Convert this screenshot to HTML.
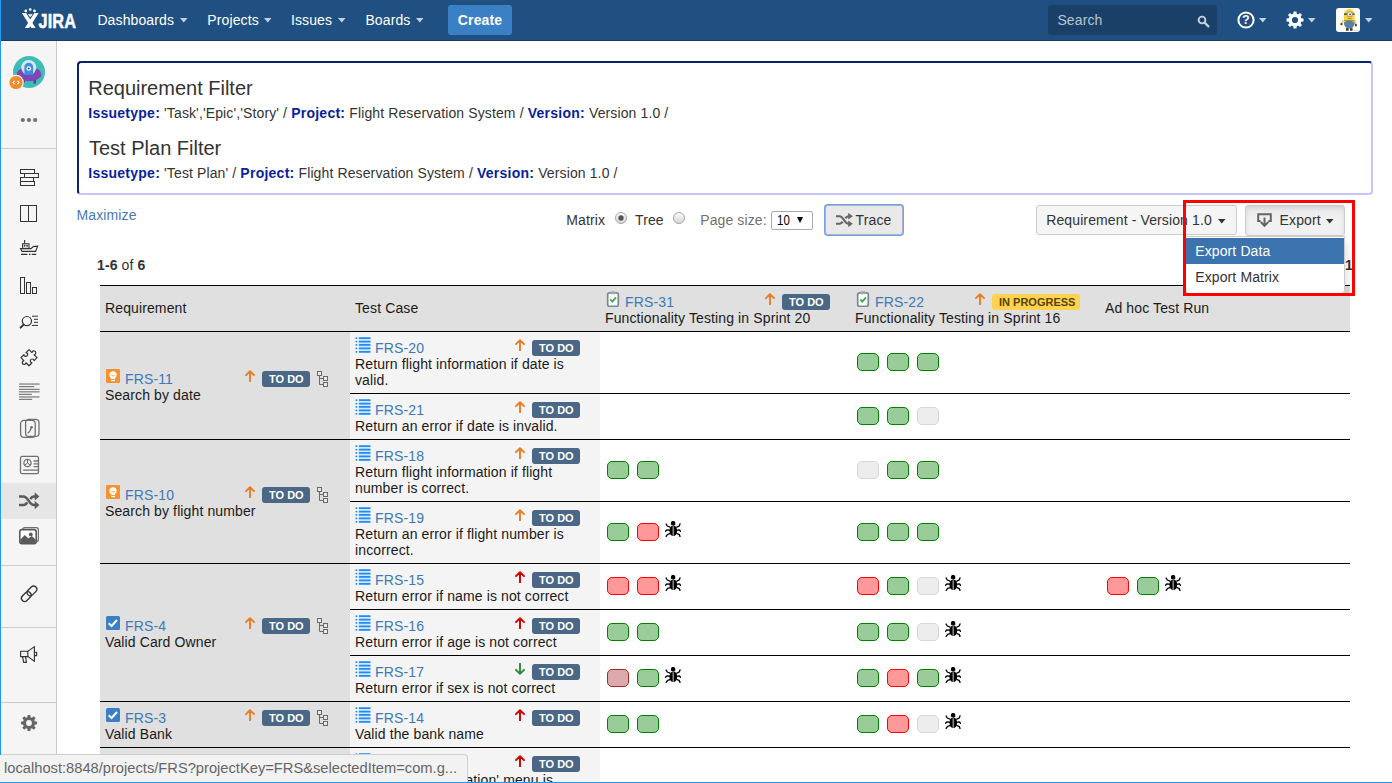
<!DOCTYPE html>
<html><head><meta charset="utf-8"><title>Traceability</title>
<style>
html,body{margin:0;padding:0}
body{width:1392px;height:783px;overflow:hidden;position:relative;background:#fff;font-family:"Liberation Sans",sans-serif;font-size:14px;line-height:16px;color:#111;letter-spacing:0.12px}
.ab{position:absolute;white-space:nowrap}
.ab svg{display:block}
.lk{color:#3f78b6}
.tx{color:#1a1a1a}
.hl{position:absolute;height:1px;background:#000}
.loz{display:block;height:16px;line-height:16px;padding:0 7px;border-radius:3px;font-size:11px;font-weight:bold;letter-spacing:0;white-space:nowrap}
.loz.todo{background:#4a6785;color:#fff;width:34px;text-align:center}
.loz.prog{background:#ffd351;color:#594300;width:74px;text-align:center}
.bx{position:absolute;box-sizing:border-box;width:22px;height:18px;border-radius:5px;border:1px solid}
.bx.g{border-color:#008000;background:#99cc99}
.bx.r{border-color:#ff0000;background:#ff9999}
.bx.y{border-color:#d6d6d6;background:#ededed}
.bx.b{border-color:#a52a2a;background:#dbaaaa}
.nv{color:#fff}
</style></head><body>
<div class="ab" style="left:0;top:0;width:1392px;height:40px;background:#205081;border-bottom:1px solid #1d3b5c"></div>
<div class="ab" style="left:22px;top:7px"><svg width="58" height="24" viewBox="0 0 58 24" >
<g fill="#fff">
<circle cx="3.8" cy="3.9" r="1.35"/><circle cx="8.2" cy="2.5" r="1.35"/><circle cx="12.5" cy="3.9" r="1.35"/>
<path d="M5.9 7.3 L10.7 7.3 L8.3 10.3 Z"/>
</g>
<clipPath id="lgc"><rect x="-1" y="6" width="20" height="15.1"/></clipPath>
<g stroke="#fff" stroke-width="3.6" fill="none" clip-path="url(#lgc)">
<path d="M1.1 4.6 L12.6 22.7"/><path d="M15.4 4.6 L3.9 22.7"/>
</g>
<text x="16.6" y="21" font-family="Liberation Sans" font-weight="bold" font-size="20.6" fill="#fff" stroke="#fff" stroke-width="0.5" textLength="37.4" lengthAdjust="spacingAndGlyphs">JIRA</text>
</svg></div>
<div class="ab nv" style="left:97.4px;top:12px">Dashboards</div><div class="ab" style="left:180.3px;top:18px"><svg width="8" height="5" viewBox="0 0 8 5" ><path d="M0 0 H7.5 L3.75 4.4 Z" fill="#c4d0dd"/></svg></div>
<div class="ab nv" style="left:207.3px;top:12px">Projects</div><div class="ab" style="left:264.2px;top:18px"><svg width="8" height="5" viewBox="0 0 8 5" ><path d="M0 0 H7.5 L3.75 4.4 Z" fill="#c4d0dd"/></svg></div>
<div class="ab nv" style="left:290.9px;top:12px">Issues</div><div class="ab" style="left:338px;top:18px"><svg width="8" height="5" viewBox="0 0 8 5" ><path d="M0 0 H7.5 L3.75 4.4 Z" fill="#c4d0dd"/></svg></div>
<div class="ab nv" style="left:365.4px;top:12px">Boards</div><div class="ab" style="left:416.1px;top:18px"><svg width="8" height="5" viewBox="0 0 8 5" ><path d="M0 0 H7.5 L3.75 4.4 Z" fill="#c4d0dd"/></svg></div>
<div class="ab" style="left:448px;top:5px;width:64px;height:30px;border-radius:3px;background:#3b7fc4;color:#fff;font-weight:bold;text-align:center;line-height:30px">Create</div>
<div class="ab" style="left:1048px;top:5px;width:169px;height:30px;border-radius:3px;background:#1a4067"></div>
<div class="ab" style="left:1057.4px;top:12px;color:#b9c5d2">Search</div>
<div class="ab" style="left:1197px;top:14.5px"><svg width="13" height="13" viewBox="0 0 13 13" ><circle cx="5" cy="5" r="3.4" fill="none" stroke="#c4d0dd" stroke-width="1.9"/><path d="M7.6 7.6 L11.4 11.4" stroke="#c4d0dd" stroke-width="2.2" stroke-linecap="round"/></svg></div>
<div class="ab" style="left:1236.4px;top:10px"><svg width="20" height="20" viewBox="0 0 20 20" ><circle cx="10" cy="10" r="7.6" fill="none" stroke="#fff" stroke-width="2"/><text x="10" y="14.3" text-anchor="middle" font-family="Liberation Sans" font-weight="bold" font-size="12.5" fill="#fff">?</text></svg></div><div class="ab" style="left:1259.4px;top:18px"><svg width="8" height="5" viewBox="0 0 8 5" ><path d="M0 0 H7.5 L3.75 4.4 Z" fill="#c4d0dd"/></svg></div>
<div class="ab" style="left:1285.4px;top:10px"><svg width="20" height="20" viewBox="0 0 20 20" ><path fill-rule="evenodd" fill="#fff" d="M16.16 8.26 L18.48 8.59 L18.48 11.41 L16.16 11.74 L15.58 13.13 L17.00 15.00 L15.00 17.00 L13.13 15.58 L11.74 16.16 L11.41 18.48 L8.59 18.48 L8.26 16.16 L6.87 15.58 L5.00 17.00 L3.00 15.00 L4.42 13.13 L3.84 11.74 L1.52 11.41 L1.52 8.59 L3.84 8.26 L4.42 6.87 L3.00 5.00 L5.00 3.00 L6.87 4.42 L8.26 3.84 L8.59 1.52 L11.41 1.52 L11.74 3.84 L13.13 4.42 L15.00 3.00 L17.00 5.00 L15.58 6.87 Z M13.1 10.0 A3.1 3.1 0 1 0 6.9 10.0 A3.1 3.1 0 1 0 13.1 10.0 Z"/></svg></div><div class="ab" style="left:1308.4px;top:18px"><svg width="8" height="5" viewBox="0 0 8 5" ><path d="M0 0 H7.5 L3.75 4.4 Z" fill="#c4d0dd"/></svg></div>
<div class="ab" style="left:1336px;top:8px"><svg width="24" height="24" viewBox="0 0 24 24" ><rect width="24" height="24" rx="3" fill="#fff"/>
<path d="M7.4 12.4 L5.6 15.6" stroke="#f3cf2e" stroke-width="1.6"/><path d="M18.8 12.4 L19.8 16.6" stroke="#f3cf2e" stroke-width="1.6"/>
<circle cx="5.4" cy="16.2" r="1.1" fill="#3a3a3a"/><circle cx="19.9" cy="17.2" r="1.1" fill="#3a3a3a"/>
<rect x="8" y="1" width="10.6" height="19.6" rx="5.3" fill="#f6d232"/>
<path d="M8 14.2 H18.6 V15.3 A5.3 5.3 0 0 1 8 15.3 Z" fill="#5b7fa6"/>
<rect x="10.2" y="12.2" width="6.2" height="3" fill="#5b7fa6"/>
<path d="M8.2 12.4 L10.4 13.4 M18.4 12.4 L16.2 13.4" stroke="#5b7fa6" stroke-width="1"/>
<rect x="8" y="5.4" width="10.6" height="1.5" fill="#4a4a4a"/>
<circle cx="13.8" cy="6.2" r="2.9" fill="#9a9a9a"/><circle cx="13.8" cy="6.2" r="2" fill="#fff"/><circle cx="14.1" cy="6.4" r="0.95" fill="#6b3a1a"/>
<path d="M11.8 10.2 Q13.6 11.2 15.6 10.2" stroke="#7a5a10" stroke-width="0.6" fill="none"/>
<rect x="10" y="20.2" width="2.6" height="2.5" fill="#333"/><rect x="14" y="20.2" width="2.6" height="2.5" fill="#333"/>
<path d="M16.5 22.6 H22" stroke="#cfcfcf" stroke-width="0.9"/></svg></div><div class="ab" style="left:1365.2px;top:18px"><svg width="8" height="5" viewBox="0 0 8 5" ><path d="M0 0 H7.5 L3.75 4.4 Z" fill="#c4d0dd"/></svg></div>

<div class="ab" style="left:0;top:41px;width:56px;height:742px;background:#f5f5f5;border-right:1px solid #ccc"></div>
<div class="ab" style="left:9px;top:54px"><svg width="40" height="40" viewBox="0 0 40 40" >
<circle cx="20" cy="18" r="16" fill="#3ebdb6"/>
<ellipse cx="20" cy="20.2" rx="12.2" ry="7" fill="#7f46b5"/>
<rect x="24.6" y="26" width="2.4" height="3.6" fill="#6b35a3"/><rect x="14" y="26.4" width="2" height="2" fill="#6b35a3"/>
<circle cx="19.75" cy="13.6" r="7.5" fill="#e4ebf3" opacity="0.92"/>
<path d="M15.4 21 V12.8 A4.35 4 0 0 1 24.1 12.8 V21 Z" fill="#3b8fe0"/>
<path d="M8 21.5 Q20 27.5 32 21.5 L32 22.5 Q20 30 8 22.5 Z" fill="#7f46b5"/>
<circle cx="19.75" cy="14.5" r="2.3" fill="#fff"/><circle cx="19.75" cy="14.5" r="1" fill="#3a4a78"/>
<circle cx="7" cy="28.5" r="7.8" fill="#f5f5f5"/><circle cx="7" cy="28.5" r="6.6" fill="#f28b2b"/>
<path d="M5.6 26.9 L4 28.5 L5.6 30.1 M8.4 26.9 L10 28.5 L8.4 30.1" fill="none" stroke="#fff" stroke-width="1.1"/>
</svg></div>
<div class="ab" style="left:19.9px;top:117.0px"><svg width="18" height="6" viewBox="0 0 18 6" ><circle cx="2.8" cy="3" r="2.1" fill="#707070"/><circle cx="9" cy="3" r="2.1" fill="#707070"/><circle cx="15.2" cy="3" r="2.1" fill="#707070"/></svg></div>
<div class="ab" style="left:1px;top:148px;width:55px;height:1px;background:#ccc"></div>
<div class="ab" style="left:19px;top:168px"><svg width="21" height="19" viewBox="0 0 21 19" ><g fill="none" stroke="#333" stroke-width="1" shape-rendering="crispEdges"><rect x="1.5" y="1.5" width="14" height="4"/><rect x="5.5" y="5.5" width="14" height="4"/><rect x="1.5" y="9.5" width="13" height="4"/><rect x="1.5" y="13.5" width="14" height="4"/></g></svg></div>
<div class="ab" style="left:19px;top:204px"><svg width="19" height="19" viewBox="0 0 19 19" ><g fill="none" stroke="#333" stroke-width="1" shape-rendering="crispEdges"><rect x="1.5" y="1.5" width="16" height="16"/><path d="M9.5 1.5 V17.5"/></g></svg></div>
<div class="ab" style="left:19px;top:239px"><svg width="21" height="18" viewBox="0 0 21 18" ><g fill="none" stroke="#333" stroke-width="1.1"><path d="M5.6 1 V4.8"/><rect x="3.6" y="4.8" width="6.4" height="4.6"/><path d="M1.6 9.6 H12 L14.2 7.6 L18.6 7.2 L16.6 12.4 H3 Z"/><path d="M2 15.4 H8.4 M10 15.4 H11.6 M12.8 15.4 H17.2"/></g><rect x="4.9" y="6" width="1.5" height="1.6" fill="#333"/><rect x="7.3" y="6" width="1.5" height="1.6" fill="#333"/></svg></div>
<div class="ab" style="left:19px;top:276px"><svg width="19" height="19" viewBox="0 0 19 19" ><g fill="none" stroke="#333" stroke-width="1" shape-rendering="crispEdges"><rect x="1.5" y="1.5" width="4" height="16"/><rect x="7.5" y="6.5" width="4" height="11"/><rect x="13.5" y="11.5" width="4" height="6"/></g></svg></div>
<div class="ab" style="left:19px;top:314px"><svg width="21" height="16" viewBox="0 0 21 16" ><g fill="none" stroke="#333"><circle cx="7.9" cy="7.1" r="4.6" stroke-width="1.2"/><path d="M4.6 10.6 L1.6 13.6" stroke-width="2" stroke-linecap="round"/><path d="M13 2.2 H19 M15 5.3 H19 M15 8.3 H19 M13 11.4 H19" stroke-width="1"/></g></svg></div>
<div class="ab" style="left:19px;top:348px"><svg width="20" height="20" viewBox="0 0 20 20" ><g transform="translate(10 9.7) rotate(45)"><path fill="none" stroke="#333" stroke-width="1.2" stroke-linejoin="round" d="M-5.7 -5.7 L-1.5 -5.7 A1.9 1.9 0 1 1 1.5 -5.7 L5.7 -5.7 L5.7 -1.5 A1.9 1.9 0 1 0 5.7 1.5 L5.7 5.7 L1.5 5.7 A1.9 1.9 0 1 1 -1.5 5.7 L-5.7 5.7 L-5.7 1.5 A1.9 1.9 0 1 0 -5.7 -1.5 Z"/></g></svg></div>
<div class="ab" style="left:18.7px;top:383px"><svg width="22" height="18" viewBox="0 0 22 18" ><rect x="0" y="0.50" width="20.6" height="1.1" fill="#707070"/><rect x="0" y="3.10" width="15.2" height="1.1" fill="#707070"/><rect x="0" y="5.80" width="20.6" height="1.1" fill="#707070"/><rect x="0" y="8.30" width="20.6" height="1.1" fill="#707070"/><rect x="0" y="10.80" width="12.8" height="1.1" fill="#707070"/><rect x="0" y="13.40" width="20.6" height="1.1" fill="#707070"/><rect x="0" y="15.80" width="13.2" height="1.1" fill="#707070"/></svg></div>
<div class="ab" style="left:19px;top:418px"><svg width="22" height="21" viewBox="0 0 22 21" ><g fill="none" stroke="#707070" stroke-width="1.3"><rect x="1.6" y="2.4" width="14.6" height="17" rx="3.2"/><rect x="6.6" y="1.4" width="13.4" height="17" rx="3.2"/><path d="M12.4 9.4 C11.6 12.6 10.4 14.2 8.6 15.2"/></g><circle cx="12.6" cy="9.2" r="1.3" fill="#707070"/></svg></div>
<div class="ab" style="left:18.5px;top:454.5px"><svg width="22" height="21" viewBox="0 0 22 21" ><g fill="none" stroke="#707070" stroke-width="1.3"><rect x="1.5" y="1.4" width="18" height="17.2" rx="1.6"/><circle cx="8.5" cy="8" r="3.6"/><path d="M8.5 4.4 V8 L5.6 10.2 M8.5 8 L11.4 10.2" stroke-width="1"/><path d="M14.6 6 H19 M14.6 8.8 H19 M14.6 11.6 H19 M4.2 15.2 H19"/></g></svg></div>
<div class="ab" style="left:1px;top:483px;width:55px;height:36px;background:#e6e6e6"></div>
<div class="ab" style="left:18.7px;top:492px"><svg width="21" height="18" viewBox="0 0 21 18" ><g fill="none" stroke="#5a5a5a" stroke-width="2.5"><path d="M0 4.4 H4.4 C9.6 4.4 9.6 13.1 15 13.1 H16.4"/><path d="M0 13.1 H4.4 C6.4 13.1 7.4 11.8 8.2 10.4 M11.4 7.1 C12.2 5.7 13.2 4.4 15 4.4 H16.4"/></g><path d="M15.7 0.3 L20.4 4.4 L15.7 8.5 Z M15.7 9 L20.4 13.1 L15.7 17.2 Z" fill="#5a5a5a"/></svg></div>
<div class="ab" style="left:18px;top:526px"><svg width="22" height="20" viewBox="0 0 22 20" ><rect x="4.6" y="1.6" width="15.8" height="14" rx="2.2" fill="none" stroke="#707070" stroke-width="1.2"/><rect x="1.8" y="3.6" width="16.4" height="14.2" rx="2.2" fill="#fff" stroke="#5a5a5a" stroke-width="1.6"/><path d="M2.4 13.4 L6.8 9 L10.2 12.4 L13.8 10 L17.6 13.6 V17.2 H2.4 Z" fill="#5a5a5a"/><circle cx="12.8" cy="8.4" r="1.9" fill="#5a5a5a"/></svg></div>
<div class="ab" style="left:1px;top:565px;width:55px;height:1px;background:#ccc"></div>
<div class="ab" style="left:19px;top:584px"><svg width="21" height="20" viewBox="0 0 21 20" ><g fill="none" stroke="#333" stroke-width="1.35" transform="rotate(-45 10.1 9.8)"><rect x="0.6" y="6.6" width="11" height="6.4" rx="3.2"/><rect x="8.6" y="6.6" width="11" height="6.4" rx="3.2"/></g></svg></div>
<div class="ab" style="left:1px;top:627px;width:55px;height:1px;background:#ccc"></div>
<div class="ab" style="left:19px;top:645px"><svg width="20" height="19" viewBox="0 0 20 19" ><g fill="none" stroke="#333" stroke-width="1.15" stroke-linejoin="round"><rect x="1.6" y="6.2" width="7.2" height="5.4"/><path d="M8.8 6.4 L15.4 1.6 V16.4 L8.8 11.4"/><path d="M15.4 7.2 H17.6 V10.6 H15.4"/><path d="M3.6 11.8 L4.6 17.4 H7.4 L6.6 11.8"/></g></svg></div>
<div class="ab" style="left:1px;top:702px;width:55px;height:1px;background:#ccc"></div>
<div class="ab" style="left:18.9px;top:712.7px"><svg width="20" height="20" viewBox="0 0 20 20" ><path fill-rule="evenodd" fill="#666" d="M15.77 8.37 L18.09 8.65 L18.09 11.35 L15.77 11.63 L15.23 12.93 L16.67 14.77 L14.77 16.67 L12.93 15.23 L11.63 15.77 L11.35 18.09 L8.65 18.09 L8.37 15.77 L7.07 15.23 L5.23 16.67 L3.33 14.77 L4.77 12.93 L4.23 11.63 L1.91 11.35 L1.91 8.65 L4.23 8.37 L4.77 7.07 L3.33 5.23 L5.23 3.33 L7.07 4.77 L8.37 4.23 L8.65 1.91 L11.35 1.91 L11.63 4.23 L12.93 4.77 L14.77 3.33 L16.67 5.23 L15.23 7.07 Z M12.9 10.0 A2.9 2.9 0 1 0 7.1 10.0 A2.9 2.9 0 1 0 12.9 10.0 Z"/></svg></div>
<div class="ab" style="left:77px;top:61px;width:1292px;height:130px;border:2px solid;border-color:#06256c #c6c6ff #c6c6ff #06256c;border-radius:4px"></div>
<div class="ab" style="left:88.2px;top:77px;font-size:20px;line-height:22px;color:#333;letter-spacing:0">Requirement Filter</div>
<div class="ab" style="left:88.3px;top:105px;color:#333;white-space:pre"><b style="color:#0b1f9a;letter-spacing:0.25px">Issuetype:</b> 'Task','Epic','Story' / <b style="color:#0b1f9a;letter-spacing:0.25px">Project:</b> Flight Reservation System / <b style="color:#0b1f9a;letter-spacing:0.25px">Version:</b> Version 1.0 /</div>
<div class="ab" style="left:89px;top:137px;font-size:20px;line-height:22px;color:#333;letter-spacing:0">Test Plan Filter</div>
<div class="ab" style="left:88.3px;top:165px;color:#333;white-space:pre"><b style="color:#0b1f9a;letter-spacing:0.25px">Issuetype:</b> 'Test Plan' / <b style="color:#0b1f9a;letter-spacing:0.25px">Project:</b> Flight Reservation System / <b style="color:#0b1f9a;letter-spacing:0.25px">Version:</b> Version 1.0 /</div>

<div class="ab lk" style="left:76.5px;top:207px;color:#4a79b6">Maximize</div>
<div class="ab" style="left:566.2px;top:212px;color:#333">Matrix</div><div class="ab" style="left:615px;top:212px"><svg width="12" height="12" viewBox="0 0 12 12" ><defs><linearGradient id="rg615" x1="0" y1="0" x2="0" y2="1"><stop offset="0" stop-color="#fdfdfd"/><stop offset="1" stop-color="#d4d4d4"/></linearGradient></defs><circle cx="6" cy="6" r="5.5" fill="url(#rg615)" stroke="#a6a6a6" stroke-width="1"/><circle cx="6" cy="6" r="2.7" fill="#555"/></svg></div>
<div class="ab" style="left:635px;top:212px;color:#333">Tree</div><div class="ab" style="left:673px;top:212px"><svg width="12" height="12" viewBox="0 0 12 12" ><defs><linearGradient id="rg673" x1="0" y1="0" x2="0" y2="1"><stop offset="0" stop-color="#fdfdfd"/><stop offset="1" stop-color="#d4d4d4"/></linearGradient></defs><circle cx="6" cy="6" r="5.5" fill="url(#rg673)" stroke="#a6a6a6" stroke-width="1"/></svg></div>
<div class="ab" style="left:700.2px;top:212px;color:#707070">Page size:</div>
<div class="ab" style="left:771px;top:211px;width:40px;height:17px;border:1px solid #a9a9a9;border-radius:2px;background:#fff"></div>
<div class="ab" style="left:777.1px;top:212px;font-size:14px;line-height:16px;color:#000;letter-spacing:0;transform:scaleX(0.82);transform-origin:0 0">10</div>
<div class="ab" style="left:797px;top:217px;width:0;height:0;border-left:3.5px solid transparent;border-right:3.5px solid transparent;border-top:6px solid #000"></div>
<div class="ab" style="left:825px;top:205px;width:76px;height:28px;border:1px solid #a8b6cc;border-radius:3px;background:#e9e9e9;box-shadow:0 0 0 1px #6f9fe8"></div>
<div class="ab" style="left:835.5px;top:213px"><svg width="17" height="14" viewBox="0 0 17 14" ><g fill="none" stroke="#666" stroke-width="2.1"><path d="M0 3.2 H3.6 C7.6 3.2 8.4 10.8 12.4 10.8 H14"/><path d="M0 10.8 H3.6 C5 10.8 5.9 9.8 6.6 8.6 M9.4 5.4 C10.1 4.2 11 3.2 12.4 3.2 H14"/></g><path d="M12.2 -0.2 L16.9 3.2 L12.2 6.6 Z M12.2 7.4 L16.9 10.8 L12.2 14.2 Z" fill="#666"/></svg></div>
<div class="ab" style="left:855.6px;top:212px;color:#333">Trace</div>
<div class="ab" style="left:1036px;top:205px;width:199px;height:28px;border:1px solid #ccc;border-radius:3px;background:#f5f5f5"></div>
<div class="ab" style="left:1046.2px;top:212px;color:#333">Requirement - Version 1.0</div><div class="ab" style="left:1218.4px;top:219px"><svg width="8" height="5" viewBox="0 0 8 5" ><path d="M0 0 H7.5 L3.75 4.4 Z" fill="#333"/></svg></div>
<div class="ab" style="left:1245px;top:205px;width:98px;height:29px;border:1px solid #ccc;border-radius:3px;background:linear-gradient(#e8e8e8,#f1f1f1 45%);box-shadow:inset 0 2px 4px rgba(0,0,0,.1)"></div>
<div class="ab" style="left:1256.6px;top:212.6px"><svg width="15" height="15" viewBox="0 0 15 15" ><path d="M3.6 8 H1.2 V1.2 H13.8 V8 H11.4" fill="none" stroke="#666" stroke-width="2"/><path d="M7.5 4.4 V12.6 M3.7 9 L7.5 12.9 L11.3 9" fill="none" stroke="#666" stroke-width="2"/></svg></div>
<div class="ab" style="left:1279.6px;top:212px;color:#333">Export</div><div class="ab" style="left:1326.2px;top:219px"><svg width="8" height="5" viewBox="0 0 8 5" ><path d="M0 0 H7.5 L3.75 4.4 Z" fill="#333"/></svg></div>
<div class="ab" style="left:97px;top:257px;color:#333"><b>1-6</b> of <b>6</b></div>
<div class="ab" style="left:1344.9px;top:257px;color:#333;font-weight:bold;letter-spacing:0">1</div>

<div class="ab" style="left:100px;top:285px;width:1250px;height:46px;background:#e0e0e0"></div>
<div class="ab" style="left:100px;top:331px;width:250px;height:460px;background:#e0e0e0"></div>
<div class="ab" style="left:350px;top:331px;width:250px;height:460px;background:#f4f4f4"></div>
<div class="hl" style="left:100px;top:285px;width:1250px"></div>
<div class="hl" style="left:100px;top:331px;width:1250px"></div>
<div class="hl" style="left:350px;top:393px;width:1000px"></div>
<div class="hl" style="left:100px;top:439px;width:1250px"></div>
<div class="hl" style="left:350px;top:501px;width:1000px"></div>
<div class="hl" style="left:100px;top:563px;width:1250px"></div>
<div class="hl" style="left:350px;top:609px;width:1000px"></div>
<div class="hl" style="left:350px;top:655px;width:1000px"></div>
<div class="hl" style="left:100px;top:701px;width:1250px"></div>
<div class="hl" style="left:100px;top:747px;width:1250px"></div>
<div class="ab tx" style="left:105px;top:300px">Requirement</div>
<div class="ab tx" style="left:355px;top:300px">Test Case</div>
<div class="ab" style="left:605px;top:291px;width:16px;height:16px"><svg width="16" height="16" viewBox="0 0 16 16" ><rect x="5.5" y="0.3" width="5" height="3" rx="1.2" fill="#a9b4bf"/><rect x="2.7" y="1.9" width="10.6" height="13.4" rx="1.6" fill="#fff" stroke="#7a8794" stroke-width="1.7"/><rect x="5.2" y="0.8" width="5.6" height="2.4" rx="1" fill="#9aa7b3"/><path d="M5.3 8.4 L7.3 10.6 L11 6.3" fill="none" stroke="#3fae49" stroke-width="1.9"/></svg></div>
<div class="ab lk" style="left:625.1px;top:294px">FRS-31</div>
<div class="ab tx" style="left:605px;top:310px">Functionality Testing in Sprint 20</div>
<div class="ab" style="left:765px;top:293px;width:10px;height:12px"><svg width="10" height="12" viewBox="0 0 10 12" ><path d="M5 1.2 L5 11.6 M1 5.2 L5 1.2 L9 5.2" fill="none" stroke="#ea7d24" stroke-width="1.9" stroke-linecap="round" stroke-linejoin="round"/></svg></div>
<div class="ab" style="left:782px;top:294px"><span class="loz todo">TO DO</span></div>
<div class="ab" style="left:855px;top:291px;width:16px;height:16px"><svg width="16" height="16" viewBox="0 0 16 16" ><rect x="5.5" y="0.3" width="5" height="3" rx="1.2" fill="#a9b4bf"/><rect x="2.7" y="1.9" width="10.6" height="13.4" rx="1.6" fill="#fff" stroke="#7a8794" stroke-width="1.7"/><rect x="5.2" y="0.8" width="5.6" height="2.4" rx="1" fill="#9aa7b3"/><path d="M5.3 8.4 L7.3 10.6 L11 6.3" fill="none" stroke="#3fae49" stroke-width="1.9"/></svg></div>
<div class="ab lk" style="left:875.1px;top:294px">FRS-22</div>
<div class="ab tx" style="left:855px;top:310px">Functionality Testing in Sprint 16</div>
<div class="ab" style="left:975px;top:293px;width:10px;height:12px"><svg width="10" height="12" viewBox="0 0 10 12" ><path d="M5 1.2 L5 11.6 M1 5.2 L5 1.2 L9 5.2" fill="none" stroke="#ea7d24" stroke-width="1.9" stroke-linecap="round" stroke-linejoin="round"/></svg></div>
<div class="ab" style="left:992px;top:294px"><span class="loz prog">IN PROGRESS</span></div>
<div class="ab tx" style="left:1105px;top:300px">Ad hoc Test Run</div>
<div class="ab" style="left:105px;top:368px;width:16px;height:16px"><svg width="16" height="16" viewBox="0 0 16 16" ><rect x="1" y="1" width="14" height="14" rx="1" fill="#f79232"/><circle cx="8" cy="6.8" r="3.6" fill="#fff"/><rect x="6" y="9.5" width="4" height="1.6" fill="#fff"/><rect x="6" y="12" width="4" height="1.2" fill="#fff"/><path d="M6.3 7.3 Q8 8.8 9.7 7.3" stroke="#f79232" stroke-width="0.9" fill="none"/></svg></div>
<div class="ab lk" style="left:125.1px;top:371px">FRS-11</div>
<div class="ab tx" style="left:105px;top:387px">Search by date</div>
<div class="ab" style="left:245px;top:370px;width:10px;height:12px"><svg width="10" height="12" viewBox="0 0 10 12" ><path d="M5 1.2 L5 11.6 M1 5.2 L5 1.2 L9 5.2" fill="none" stroke="#ea7d24" stroke-width="1.9" stroke-linecap="round" stroke-linejoin="round"/></svg></div>
<div class="ab" style="left:262px;top:371px"><span class="loz todo">TO DO</span></div>
<div class="ab" style="left:317px;top:371px;width:12px;height:16px"><svg width="12" height="16" viewBox="0 0 12 16" ><g fill="#e9e9e9" stroke="#6a6a6a" stroke-width="1"><rect x="0.5" y="0.5" width="4" height="4"/><rect x="6.5" y="5.5" width="4" height="4"/><rect x="6.5" y="11.5" width="4" height="4"/><path d="M2.5 4.5 V13.5 H6.5 M2.5 7.5 H6.5" fill="none"/></g></svg></div>
<div class="ab" style="left:105px;top:484px;width:16px;height:16px"><svg width="16" height="16" viewBox="0 0 16 16" ><rect x="1" y="1" width="14" height="14" rx="1" fill="#f79232"/><circle cx="8" cy="6.8" r="3.6" fill="#fff"/><rect x="6" y="9.5" width="4" height="1.6" fill="#fff"/><rect x="6" y="12" width="4" height="1.2" fill="#fff"/><path d="M6.3 7.3 Q8 8.8 9.7 7.3" stroke="#f79232" stroke-width="0.9" fill="none"/></svg></div>
<div class="ab lk" style="left:125.1px;top:487px">FRS-10</div>
<div class="ab tx" style="left:105px;top:503px">Search by flight number</div>
<div class="ab" style="left:245px;top:486px;width:10px;height:12px"><svg width="10" height="12" viewBox="0 0 10 12" ><path d="M5 1.2 L5 11.6 M1 5.2 L5 1.2 L9 5.2" fill="none" stroke="#ea7d24" stroke-width="1.9" stroke-linecap="round" stroke-linejoin="round"/></svg></div>
<div class="ab" style="left:262px;top:487px"><span class="loz todo">TO DO</span></div>
<div class="ab" style="left:317px;top:487px;width:12px;height:16px"><svg width="12" height="16" viewBox="0 0 12 16" ><g fill="#e9e9e9" stroke="#6a6a6a" stroke-width="1"><rect x="0.5" y="0.5" width="4" height="4"/><rect x="6.5" y="5.5" width="4" height="4"/><rect x="6.5" y="11.5" width="4" height="4"/><path d="M2.5 4.5 V13.5 H6.5 M2.5 7.5 H6.5" fill="none"/></g></svg></div>
<div class="ab" style="left:105px;top:615px;width:16px;height:16px"><svg width="16" height="16" viewBox="0 0 16 16" ><rect x="1" y="1" width="14" height="14" rx="1.5" fill="#3b7fc4"/><path d="M3.7 8.3 L6.6 11 L12 5" fill="none" stroke="#fff" stroke-width="2"/></svg></div>
<div class="ab lk" style="left:125.1px;top:618px">FRS-4</div>
<div class="ab tx" style="left:105px;top:634px">Valid Card Owner</div>
<div class="ab" style="left:245px;top:617px;width:10px;height:12px"><svg width="10" height="12" viewBox="0 0 10 12" ><path d="M5 1.2 L5 11.6 M1 5.2 L5 1.2 L9 5.2" fill="none" stroke="#ea7d24" stroke-width="1.9" stroke-linecap="round" stroke-linejoin="round"/></svg></div>
<div class="ab" style="left:262px;top:618px"><span class="loz todo">TO DO</span></div>
<div class="ab" style="left:317px;top:618px;width:12px;height:16px"><svg width="12" height="16" viewBox="0 0 12 16" ><g fill="#e9e9e9" stroke="#6a6a6a" stroke-width="1"><rect x="0.5" y="0.5" width="4" height="4"/><rect x="6.5" y="5.5" width="4" height="4"/><rect x="6.5" y="11.5" width="4" height="4"/><path d="M2.5 4.5 V13.5 H6.5 M2.5 7.5 H6.5" fill="none"/></g></svg></div>
<div class="ab" style="left:105px;top:707px;width:16px;height:16px"><svg width="16" height="16" viewBox="0 0 16 16" ><rect x="1" y="1" width="14" height="14" rx="1.5" fill="#3b7fc4"/><path d="M3.7 8.3 L6.6 11 L12 5" fill="none" stroke="#fff" stroke-width="2"/></svg></div>
<div class="ab lk" style="left:125.1px;top:710px">FRS-3</div>
<div class="ab tx" style="left:105px;top:726px">Valid Bank</div>
<div class="ab" style="left:245px;top:709px;width:10px;height:12px"><svg width="10" height="12" viewBox="0 0 10 12" ><path d="M5 1.2 L5 11.6 M1 5.2 L5 1.2 L9 5.2" fill="none" stroke="#ea7d24" stroke-width="1.9" stroke-linecap="round" stroke-linejoin="round"/></svg></div>
<div class="ab" style="left:262px;top:710px"><span class="loz todo">TO DO</span></div>
<div class="ab" style="left:317px;top:710px;width:12px;height:16px"><svg width="12" height="16" viewBox="0 0 12 16" ><g fill="#e9e9e9" stroke="#6a6a6a" stroke-width="1"><rect x="0.5" y="0.5" width="4" height="4"/><rect x="6.5" y="5.5" width="4" height="4"/><rect x="6.5" y="11.5" width="4" height="4"/><path d="M2.5 4.5 V13.5 H6.5 M2.5 7.5 H6.5" fill="none"/></g></svg></div>
<div class="ab" style="left:355px;top:337px;width:16px;height:16px"><svg width="16" height="16" viewBox="0 0 16 16" ><rect x="3.8" y="0.6" width="11.7" height="15" fill="#1a8cff" opacity="0.13"/><rect x="0.5" y="0.25" width="1.8" height="1.75" rx="0.6" fill="#1a8cff"/><rect x="3.8" y="0.25" width="11.7" height="1.75" rx="0.5" fill="#1a8cff"/><rect x="0.5" y="3.68" width="1.8" height="1.75" rx="0.6" fill="#1a8cff"/><rect x="3.8" y="3.68" width="11.7" height="1.75" rx="0.5" fill="#1a8cff"/><rect x="0.5" y="7.11" width="1.8" height="1.75" rx="0.6" fill="#1a8cff"/><rect x="3.8" y="7.11" width="11.7" height="1.75" rx="0.5" fill="#1a8cff"/><rect x="0.5" y="10.54" width="1.8" height="1.75" rx="0.6" fill="#1a8cff"/><rect x="3.8" y="10.54" width="11.7" height="1.75" rx="0.5" fill="#1a8cff"/><rect x="0.5" y="13.97" width="1.8" height="1.75" rx="0.6" fill="#1a8cff"/><rect x="3.8" y="13.97" width="11.7" height="1.75" rx="0.5" fill="#1a8cff"/></svg></div>
<div class="ab lk" style="left:375.1px;top:340px">FRS-20</div>
<div class="ab tx" style="left:355px;top:356px">Return flight information if date is</div>
<div class="ab tx" style="left:355px;top:372px">valid.</div>
<div class="ab" style="left:515px;top:339px;width:10px;height:12px"><svg width="10" height="12" viewBox="0 0 10 12" ><path d="M5 1.2 L5 11.6 M1 5.2 L5 1.2 L9 5.2" fill="none" stroke="#ea7d24" stroke-width="1.9" stroke-linecap="round" stroke-linejoin="round"/></svg></div>
<div class="ab" style="left:532px;top:340px"><span class="loz todo">TO DO</span></div>
<div class="bx g" style="left:857px;top:353.0px"></div>
<div class="bx g" style="left:887px;top:353.0px"></div>
<div class="bx g" style="left:917px;top:353.0px"></div>
<div class="ab" style="left:355px;top:399px;width:16px;height:16px"><svg width="16" height="16" viewBox="0 0 16 16" ><rect x="3.8" y="0.6" width="11.7" height="15" fill="#1a8cff" opacity="0.13"/><rect x="0.5" y="0.25" width="1.8" height="1.75" rx="0.6" fill="#1a8cff"/><rect x="3.8" y="0.25" width="11.7" height="1.75" rx="0.5" fill="#1a8cff"/><rect x="0.5" y="3.68" width="1.8" height="1.75" rx="0.6" fill="#1a8cff"/><rect x="3.8" y="3.68" width="11.7" height="1.75" rx="0.5" fill="#1a8cff"/><rect x="0.5" y="7.11" width="1.8" height="1.75" rx="0.6" fill="#1a8cff"/><rect x="3.8" y="7.11" width="11.7" height="1.75" rx="0.5" fill="#1a8cff"/><rect x="0.5" y="10.54" width="1.8" height="1.75" rx="0.6" fill="#1a8cff"/><rect x="3.8" y="10.54" width="11.7" height="1.75" rx="0.5" fill="#1a8cff"/><rect x="0.5" y="13.97" width="1.8" height="1.75" rx="0.6" fill="#1a8cff"/><rect x="3.8" y="13.97" width="11.7" height="1.75" rx="0.5" fill="#1a8cff"/></svg></div>
<div class="ab lk" style="left:375.1px;top:402px">FRS-21</div>
<div class="ab tx" style="left:355px;top:418px">Return an error if date is invalid.</div>
<div class="ab" style="left:515px;top:401px;width:10px;height:12px"><svg width="10" height="12" viewBox="0 0 10 12" ><path d="M5 1.2 L5 11.6 M1 5.2 L5 1.2 L9 5.2" fill="none" stroke="#ea7d24" stroke-width="1.9" stroke-linecap="round" stroke-linejoin="round"/></svg></div>
<div class="ab" style="left:532px;top:402px"><span class="loz todo">TO DO</span></div>
<div class="bx g" style="left:857px;top:407.0px"></div>
<div class="bx g" style="left:887px;top:407.0px"></div>
<div class="bx y" style="left:917px;top:407.0px"></div>
<div class="ab" style="left:355px;top:445px;width:16px;height:16px"><svg width="16" height="16" viewBox="0 0 16 16" ><rect x="3.8" y="0.6" width="11.7" height="15" fill="#1a8cff" opacity="0.13"/><rect x="0.5" y="0.25" width="1.8" height="1.75" rx="0.6" fill="#1a8cff"/><rect x="3.8" y="0.25" width="11.7" height="1.75" rx="0.5" fill="#1a8cff"/><rect x="0.5" y="3.68" width="1.8" height="1.75" rx="0.6" fill="#1a8cff"/><rect x="3.8" y="3.68" width="11.7" height="1.75" rx="0.5" fill="#1a8cff"/><rect x="0.5" y="7.11" width="1.8" height="1.75" rx="0.6" fill="#1a8cff"/><rect x="3.8" y="7.11" width="11.7" height="1.75" rx="0.5" fill="#1a8cff"/><rect x="0.5" y="10.54" width="1.8" height="1.75" rx="0.6" fill="#1a8cff"/><rect x="3.8" y="10.54" width="11.7" height="1.75" rx="0.5" fill="#1a8cff"/><rect x="0.5" y="13.97" width="1.8" height="1.75" rx="0.6" fill="#1a8cff"/><rect x="3.8" y="13.97" width="11.7" height="1.75" rx="0.5" fill="#1a8cff"/></svg></div>
<div class="ab lk" style="left:375.1px;top:448px">FRS-18</div>
<div class="ab tx" style="left:355px;top:464px">Return flight information if flight</div>
<div class="ab tx" style="left:355px;top:480px">number is correct.</div>
<div class="ab" style="left:515px;top:447px;width:10px;height:12px"><svg width="10" height="12" viewBox="0 0 10 12" ><path d="M5 1.2 L5 11.6 M1 5.2 L5 1.2 L9 5.2" fill="none" stroke="#ea7d24" stroke-width="1.9" stroke-linecap="round" stroke-linejoin="round"/></svg></div>
<div class="ab" style="left:532px;top:448px"><span class="loz todo">TO DO</span></div>
<div class="bx g" style="left:607px;top:461.0px"></div>
<div class="bx g" style="left:637px;top:461.0px"></div>
<div class="bx y" style="left:857px;top:461.0px"></div>
<div class="bx g" style="left:887px;top:461.0px"></div>
<div class="bx g" style="left:917px;top:461.0px"></div>
<div class="ab" style="left:355px;top:507px;width:16px;height:16px"><svg width="16" height="16" viewBox="0 0 16 16" ><rect x="3.8" y="0.6" width="11.7" height="15" fill="#1a8cff" opacity="0.13"/><rect x="0.5" y="0.25" width="1.8" height="1.75" rx="0.6" fill="#1a8cff"/><rect x="3.8" y="0.25" width="11.7" height="1.75" rx="0.5" fill="#1a8cff"/><rect x="0.5" y="3.68" width="1.8" height="1.75" rx="0.6" fill="#1a8cff"/><rect x="3.8" y="3.68" width="11.7" height="1.75" rx="0.5" fill="#1a8cff"/><rect x="0.5" y="7.11" width="1.8" height="1.75" rx="0.6" fill="#1a8cff"/><rect x="3.8" y="7.11" width="11.7" height="1.75" rx="0.5" fill="#1a8cff"/><rect x="0.5" y="10.54" width="1.8" height="1.75" rx="0.6" fill="#1a8cff"/><rect x="3.8" y="10.54" width="11.7" height="1.75" rx="0.5" fill="#1a8cff"/><rect x="0.5" y="13.97" width="1.8" height="1.75" rx="0.6" fill="#1a8cff"/><rect x="3.8" y="13.97" width="11.7" height="1.75" rx="0.5" fill="#1a8cff"/></svg></div>
<div class="ab lk" style="left:375.1px;top:510px">FRS-19</div>
<div class="ab tx" style="left:355px;top:526px">Return an error if flight number is</div>
<div class="ab tx" style="left:355px;top:542px">incorrect.</div>
<div class="ab" style="left:515px;top:509px;width:10px;height:12px"><svg width="10" height="12" viewBox="0 0 10 12" ><path d="M5 1.2 L5 11.6 M1 5.2 L5 1.2 L9 5.2" fill="none" stroke="#ea7d24" stroke-width="1.9" stroke-linecap="round" stroke-linejoin="round"/></svg></div>
<div class="ab" style="left:532px;top:510px"><span class="loz todo">TO DO</span></div>
<div class="bx g" style="left:607px;top:523.0px"></div>
<div class="bx r" style="left:637px;top:523.0px"></div>
<div class="ab" style="left:665px;top:521.0px;width:16px;height:16px"><svg width="16" height="16" viewBox="0 0 16 16" ><g stroke="#000" stroke-width="1.35" stroke-linecap="round" stroke-linejoin="round" fill="none"><path d="M5 6.2 L2.3 5 L1.1 3"/><path d="M11.8 6.2 L14.2 5 L15 3"/><path d="M4.6 9.2 L1.8 8.9 L0.6 10.2"/><path d="M12.2 9.2 L14.6 8.9 L15.5 10.4"/><path d="M5.1 12.6 L2.6 13.4 L1.2 15.4"/><path d="M11.9 12.6 L14.1 13.4 L15 15.4"/></g><ellipse cx="8.3" cy="9.7" rx="3.9" ry="5.4" fill="#000"/><rect x="7.5" y="5.2" width="1.5" height="9.6" fill="#8a8a8a"/><ellipse cx="8.1" cy="2" rx="2.2" ry="2.1" fill="#000"/><rect x="5.9" y="2.4" width="4.4" height="1.4" fill="#000"/></svg></div>
<div class="bx g" style="left:857px;top:523.0px"></div>
<div class="bx g" style="left:887px;top:523.0px"></div>
<div class="bx g" style="left:917px;top:523.0px"></div>
<div class="ab" style="left:355px;top:569px;width:16px;height:16px"><svg width="16" height="16" viewBox="0 0 16 16" ><rect x="3.8" y="0.6" width="11.7" height="15" fill="#1a8cff" opacity="0.13"/><rect x="0.5" y="0.25" width="1.8" height="1.75" rx="0.6" fill="#1a8cff"/><rect x="3.8" y="0.25" width="11.7" height="1.75" rx="0.5" fill="#1a8cff"/><rect x="0.5" y="3.68" width="1.8" height="1.75" rx="0.6" fill="#1a8cff"/><rect x="3.8" y="3.68" width="11.7" height="1.75" rx="0.5" fill="#1a8cff"/><rect x="0.5" y="7.11" width="1.8" height="1.75" rx="0.6" fill="#1a8cff"/><rect x="3.8" y="7.11" width="11.7" height="1.75" rx="0.5" fill="#1a8cff"/><rect x="0.5" y="10.54" width="1.8" height="1.75" rx="0.6" fill="#1a8cff"/><rect x="3.8" y="10.54" width="11.7" height="1.75" rx="0.5" fill="#1a8cff"/><rect x="0.5" y="13.97" width="1.8" height="1.75" rx="0.6" fill="#1a8cff"/><rect x="3.8" y="13.97" width="11.7" height="1.75" rx="0.5" fill="#1a8cff"/></svg></div>
<div class="ab lk" style="left:375.1px;top:572px">FRS-15</div>
<div class="ab tx" style="left:355px;top:588px">Return error if name is not correct</div>
<div class="ab" style="left:515px;top:571px;width:10px;height:12px"><svg width="10" height="12" viewBox="0 0 10 12" ><path d="M5 1.2 L5 11.6 M1 5.2 L5 1.2 L9 5.2" fill="none" stroke="#ce0000" stroke-width="1.9" stroke-linecap="round" stroke-linejoin="round"/></svg></div>
<div class="ab" style="left:532px;top:572px"><span class="loz todo">TO DO</span></div>
<div class="bx r" style="left:607px;top:577.0px"></div>
<div class="bx r" style="left:637px;top:577.0px"></div>
<div class="ab" style="left:665px;top:575.0px;width:16px;height:16px"><svg width="16" height="16" viewBox="0 0 16 16" ><g stroke="#000" stroke-width="1.35" stroke-linecap="round" stroke-linejoin="round" fill="none"><path d="M5 6.2 L2.3 5 L1.1 3"/><path d="M11.8 6.2 L14.2 5 L15 3"/><path d="M4.6 9.2 L1.8 8.9 L0.6 10.2"/><path d="M12.2 9.2 L14.6 8.9 L15.5 10.4"/><path d="M5.1 12.6 L2.6 13.4 L1.2 15.4"/><path d="M11.9 12.6 L14.1 13.4 L15 15.4"/></g><ellipse cx="8.3" cy="9.7" rx="3.9" ry="5.4" fill="#000"/><rect x="7.5" y="5.2" width="1.5" height="9.6" fill="#8a8a8a"/><ellipse cx="8.1" cy="2" rx="2.2" ry="2.1" fill="#000"/><rect x="5.9" y="2.4" width="4.4" height="1.4" fill="#000"/></svg></div>
<div class="bx r" style="left:857px;top:577.0px"></div>
<div class="bx g" style="left:887px;top:577.0px"></div>
<div class="bx y" style="left:917px;top:577.0px"></div>
<div class="ab" style="left:945px;top:575.0px;width:16px;height:16px"><svg width="16" height="16" viewBox="0 0 16 16" ><g stroke="#000" stroke-width="1.35" stroke-linecap="round" stroke-linejoin="round" fill="none"><path d="M5 6.2 L2.3 5 L1.1 3"/><path d="M11.8 6.2 L14.2 5 L15 3"/><path d="M4.6 9.2 L1.8 8.9 L0.6 10.2"/><path d="M12.2 9.2 L14.6 8.9 L15.5 10.4"/><path d="M5.1 12.6 L2.6 13.4 L1.2 15.4"/><path d="M11.9 12.6 L14.1 13.4 L15 15.4"/></g><ellipse cx="8.3" cy="9.7" rx="3.9" ry="5.4" fill="#000"/><rect x="7.5" y="5.2" width="1.5" height="9.6" fill="#8a8a8a"/><ellipse cx="8.1" cy="2" rx="2.2" ry="2.1" fill="#000"/><rect x="5.9" y="2.4" width="4.4" height="1.4" fill="#000"/></svg></div>
<div class="bx r" style="left:1107px;top:577.0px"></div>
<div class="bx g" style="left:1137px;top:577.0px"></div>
<div class="ab" style="left:1165px;top:575.0px;width:16px;height:16px"><svg width="16" height="16" viewBox="0 0 16 16" ><g stroke="#000" stroke-width="1.35" stroke-linecap="round" stroke-linejoin="round" fill="none"><path d="M5 6.2 L2.3 5 L1.1 3"/><path d="M11.8 6.2 L14.2 5 L15 3"/><path d="M4.6 9.2 L1.8 8.9 L0.6 10.2"/><path d="M12.2 9.2 L14.6 8.9 L15.5 10.4"/><path d="M5.1 12.6 L2.6 13.4 L1.2 15.4"/><path d="M11.9 12.6 L14.1 13.4 L15 15.4"/></g><ellipse cx="8.3" cy="9.7" rx="3.9" ry="5.4" fill="#000"/><rect x="7.5" y="5.2" width="1.5" height="9.6" fill="#8a8a8a"/><ellipse cx="8.1" cy="2" rx="2.2" ry="2.1" fill="#000"/><rect x="5.9" y="2.4" width="4.4" height="1.4" fill="#000"/></svg></div>
<div class="ab" style="left:355px;top:615px;width:16px;height:16px"><svg width="16" height="16" viewBox="0 0 16 16" ><rect x="3.8" y="0.6" width="11.7" height="15" fill="#1a8cff" opacity="0.13"/><rect x="0.5" y="0.25" width="1.8" height="1.75" rx="0.6" fill="#1a8cff"/><rect x="3.8" y="0.25" width="11.7" height="1.75" rx="0.5" fill="#1a8cff"/><rect x="0.5" y="3.68" width="1.8" height="1.75" rx="0.6" fill="#1a8cff"/><rect x="3.8" y="3.68" width="11.7" height="1.75" rx="0.5" fill="#1a8cff"/><rect x="0.5" y="7.11" width="1.8" height="1.75" rx="0.6" fill="#1a8cff"/><rect x="3.8" y="7.11" width="11.7" height="1.75" rx="0.5" fill="#1a8cff"/><rect x="0.5" y="10.54" width="1.8" height="1.75" rx="0.6" fill="#1a8cff"/><rect x="3.8" y="10.54" width="11.7" height="1.75" rx="0.5" fill="#1a8cff"/><rect x="0.5" y="13.97" width="1.8" height="1.75" rx="0.6" fill="#1a8cff"/><rect x="3.8" y="13.97" width="11.7" height="1.75" rx="0.5" fill="#1a8cff"/></svg></div>
<div class="ab lk" style="left:375.1px;top:618px">FRS-16</div>
<div class="ab tx" style="left:355px;top:634px">Return error if age is not correct</div>
<div class="ab" style="left:515px;top:617px;width:10px;height:12px"><svg width="10" height="12" viewBox="0 0 10 12" ><path d="M5 1.2 L5 11.6 M1 5.2 L5 1.2 L9 5.2" fill="none" stroke="#ce0000" stroke-width="1.9" stroke-linecap="round" stroke-linejoin="round"/></svg></div>
<div class="ab" style="left:532px;top:618px"><span class="loz todo">TO DO</span></div>
<div class="bx g" style="left:607px;top:623.0px"></div>
<div class="bx g" style="left:637px;top:623.0px"></div>
<div class="bx g" style="left:857px;top:623.0px"></div>
<div class="bx g" style="left:887px;top:623.0px"></div>
<div class="bx y" style="left:917px;top:623.0px"></div>
<div class="ab" style="left:945px;top:621.0px;width:16px;height:16px"><svg width="16" height="16" viewBox="0 0 16 16" ><g stroke="#000" stroke-width="1.35" stroke-linecap="round" stroke-linejoin="round" fill="none"><path d="M5 6.2 L2.3 5 L1.1 3"/><path d="M11.8 6.2 L14.2 5 L15 3"/><path d="M4.6 9.2 L1.8 8.9 L0.6 10.2"/><path d="M12.2 9.2 L14.6 8.9 L15.5 10.4"/><path d="M5.1 12.6 L2.6 13.4 L1.2 15.4"/><path d="M11.9 12.6 L14.1 13.4 L15 15.4"/></g><ellipse cx="8.3" cy="9.7" rx="3.9" ry="5.4" fill="#000"/><rect x="7.5" y="5.2" width="1.5" height="9.6" fill="#8a8a8a"/><ellipse cx="8.1" cy="2" rx="2.2" ry="2.1" fill="#000"/><rect x="5.9" y="2.4" width="4.4" height="1.4" fill="#000"/></svg></div>
<div class="ab" style="left:355px;top:661px;width:16px;height:16px"><svg width="16" height="16" viewBox="0 0 16 16" ><rect x="3.8" y="0.6" width="11.7" height="15" fill="#1a8cff" opacity="0.13"/><rect x="0.5" y="0.25" width="1.8" height="1.75" rx="0.6" fill="#1a8cff"/><rect x="3.8" y="0.25" width="11.7" height="1.75" rx="0.5" fill="#1a8cff"/><rect x="0.5" y="3.68" width="1.8" height="1.75" rx="0.6" fill="#1a8cff"/><rect x="3.8" y="3.68" width="11.7" height="1.75" rx="0.5" fill="#1a8cff"/><rect x="0.5" y="7.11" width="1.8" height="1.75" rx="0.6" fill="#1a8cff"/><rect x="3.8" y="7.11" width="11.7" height="1.75" rx="0.5" fill="#1a8cff"/><rect x="0.5" y="10.54" width="1.8" height="1.75" rx="0.6" fill="#1a8cff"/><rect x="3.8" y="10.54" width="11.7" height="1.75" rx="0.5" fill="#1a8cff"/><rect x="0.5" y="13.97" width="1.8" height="1.75" rx="0.6" fill="#1a8cff"/><rect x="3.8" y="13.97" width="11.7" height="1.75" rx="0.5" fill="#1a8cff"/></svg></div>
<div class="ab lk" style="left:375.1px;top:664px">FRS-17</div>
<div class="ab tx" style="left:355px;top:680px">Return error if sex is not correct</div>
<div class="ab" style="left:515px;top:663px;width:10px;height:12px"><svg width="10" height="12" viewBox="0 0 10 12" ><path d="M5 0.6 L5 10.8 M1 6.8 L5 10.8 L9 6.8" fill="none" stroke="#2a8735" stroke-width="1.9" stroke-linecap="round" stroke-linejoin="round"/></svg></div>
<div class="ab" style="left:532px;top:664px"><span class="loz todo">TO DO</span></div>
<div class="bx b" style="left:607px;top:669.0px"></div>
<div class="bx g" style="left:637px;top:669.0px"></div>
<div class="ab" style="left:665px;top:667.0px;width:16px;height:16px"><svg width="16" height="16" viewBox="0 0 16 16" ><g stroke="#000" stroke-width="1.35" stroke-linecap="round" stroke-linejoin="round" fill="none"><path d="M5 6.2 L2.3 5 L1.1 3"/><path d="M11.8 6.2 L14.2 5 L15 3"/><path d="M4.6 9.2 L1.8 8.9 L0.6 10.2"/><path d="M12.2 9.2 L14.6 8.9 L15.5 10.4"/><path d="M5.1 12.6 L2.6 13.4 L1.2 15.4"/><path d="M11.9 12.6 L14.1 13.4 L15 15.4"/></g><ellipse cx="8.3" cy="9.7" rx="3.9" ry="5.4" fill="#000"/><rect x="7.5" y="5.2" width="1.5" height="9.6" fill="#8a8a8a"/><ellipse cx="8.1" cy="2" rx="2.2" ry="2.1" fill="#000"/><rect x="5.9" y="2.4" width="4.4" height="1.4" fill="#000"/></svg></div>
<div class="bx g" style="left:857px;top:669.0px"></div>
<div class="bx r" style="left:887px;top:669.0px"></div>
<div class="bx g" style="left:917px;top:669.0px"></div>
<div class="ab" style="left:945px;top:667.0px;width:16px;height:16px"><svg width="16" height="16" viewBox="0 0 16 16" ><g stroke="#000" stroke-width="1.35" stroke-linecap="round" stroke-linejoin="round" fill="none"><path d="M5 6.2 L2.3 5 L1.1 3"/><path d="M11.8 6.2 L14.2 5 L15 3"/><path d="M4.6 9.2 L1.8 8.9 L0.6 10.2"/><path d="M12.2 9.2 L14.6 8.9 L15.5 10.4"/><path d="M5.1 12.6 L2.6 13.4 L1.2 15.4"/><path d="M11.9 12.6 L14.1 13.4 L15 15.4"/></g><ellipse cx="8.3" cy="9.7" rx="3.9" ry="5.4" fill="#000"/><rect x="7.5" y="5.2" width="1.5" height="9.6" fill="#8a8a8a"/><ellipse cx="8.1" cy="2" rx="2.2" ry="2.1" fill="#000"/><rect x="5.9" y="2.4" width="4.4" height="1.4" fill="#000"/></svg></div>
<div class="ab" style="left:355px;top:707px;width:16px;height:16px"><svg width="16" height="16" viewBox="0 0 16 16" ><rect x="3.8" y="0.6" width="11.7" height="15" fill="#1a8cff" opacity="0.13"/><rect x="0.5" y="0.25" width="1.8" height="1.75" rx="0.6" fill="#1a8cff"/><rect x="3.8" y="0.25" width="11.7" height="1.75" rx="0.5" fill="#1a8cff"/><rect x="0.5" y="3.68" width="1.8" height="1.75" rx="0.6" fill="#1a8cff"/><rect x="3.8" y="3.68" width="11.7" height="1.75" rx="0.5" fill="#1a8cff"/><rect x="0.5" y="7.11" width="1.8" height="1.75" rx="0.6" fill="#1a8cff"/><rect x="3.8" y="7.11" width="11.7" height="1.75" rx="0.5" fill="#1a8cff"/><rect x="0.5" y="10.54" width="1.8" height="1.75" rx="0.6" fill="#1a8cff"/><rect x="3.8" y="10.54" width="11.7" height="1.75" rx="0.5" fill="#1a8cff"/><rect x="0.5" y="13.97" width="1.8" height="1.75" rx="0.6" fill="#1a8cff"/><rect x="3.8" y="13.97" width="11.7" height="1.75" rx="0.5" fill="#1a8cff"/></svg></div>
<div class="ab lk" style="left:375.1px;top:710px">FRS-14</div>
<div class="ab tx" style="left:355px;top:726px">Valid the bank name</div>
<div class="ab" style="left:515px;top:709px;width:10px;height:12px"><svg width="10" height="12" viewBox="0 0 10 12" ><path d="M5 1.2 L5 11.6 M1 5.2 L5 1.2 L9 5.2" fill="none" stroke="#ce0000" stroke-width="1.9" stroke-linecap="round" stroke-linejoin="round"/></svg></div>
<div class="ab" style="left:532px;top:710px"><span class="loz todo">TO DO</span></div>
<div class="bx g" style="left:607px;top:715.0px"></div>
<div class="bx g" style="left:637px;top:715.0px"></div>
<div class="bx g" style="left:857px;top:715.0px"></div>
<div class="bx r" style="left:887px;top:715.0px"></div>
<div class="bx y" style="left:917px;top:715.0px"></div>
<div class="ab" style="left:945px;top:713.0px;width:16px;height:16px"><svg width="16" height="16" viewBox="0 0 16 16" ><g stroke="#000" stroke-width="1.35" stroke-linecap="round" stroke-linejoin="round" fill="none"><path d="M5 6.2 L2.3 5 L1.1 3"/><path d="M11.8 6.2 L14.2 5 L15 3"/><path d="M4.6 9.2 L1.8 8.9 L0.6 10.2"/><path d="M12.2 9.2 L14.6 8.9 L15.5 10.4"/><path d="M5.1 12.6 L2.6 13.4 L1.2 15.4"/><path d="M11.9 12.6 L14.1 13.4 L15 15.4"/></g><ellipse cx="8.3" cy="9.7" rx="3.9" ry="5.4" fill="#000"/><rect x="7.5" y="5.2" width="1.5" height="9.6" fill="#8a8a8a"/><ellipse cx="8.1" cy="2" rx="2.2" ry="2.1" fill="#000"/><rect x="5.9" y="2.4" width="4.4" height="1.4" fill="#000"/></svg></div>
<div class="ab" style="left:355px;top:753px;width:16px;height:16px"><svg width="16" height="16" viewBox="0 0 16 16" ><rect x="3.8" y="0.6" width="11.7" height="15" fill="#1a8cff" opacity="0.13"/><rect x="0.5" y="0.25" width="1.8" height="1.75" rx="0.6" fill="#1a8cff"/><rect x="3.8" y="0.25" width="11.7" height="1.75" rx="0.5" fill="#1a8cff"/><rect x="0.5" y="3.68" width="1.8" height="1.75" rx="0.6" fill="#1a8cff"/><rect x="3.8" y="3.68" width="11.7" height="1.75" rx="0.5" fill="#1a8cff"/><rect x="0.5" y="7.11" width="1.8" height="1.75" rx="0.6" fill="#1a8cff"/><rect x="3.8" y="7.11" width="11.7" height="1.75" rx="0.5" fill="#1a8cff"/><rect x="0.5" y="10.54" width="1.8" height="1.75" rx="0.6" fill="#1a8cff"/><rect x="3.8" y="10.54" width="11.7" height="1.75" rx="0.5" fill="#1a8cff"/><rect x="0.5" y="13.97" width="1.8" height="1.75" rx="0.6" fill="#1a8cff"/><rect x="3.8" y="13.97" width="11.7" height="1.75" rx="0.5" fill="#1a8cff"/></svg></div>
<div class="ab lk" style="left:375.1px;top:756px">FRS-13</div>
<div class="ab tx" style="left:362px;top:772px">Check if 'Reservation' menu is</div>
<div class="ab tx" style="left:362px;top:788px">available.</div>
<div class="ab" style="left:515px;top:755px;width:10px;height:12px"><svg width="10" height="12" viewBox="0 0 10 12" ><path d="M5 1.2 L5 11.6 M1 5.2 L5 1.2 L9 5.2" fill="none" stroke="#ce0000" stroke-width="1.9" stroke-linecap="round" stroke-linejoin="round"/></svg></div>
<div class="ab" style="left:532px;top:756px"><span class="loz todo">TO DO</span></div>
<div class="ab" style="left:1184px;top:236px;width:171px;height:58px;overflow:hidden"><div class="ab" style="left:1px;top:0;width:158px;height:56px;border:1px solid #ccc;border-radius:0 0 4px 4px;background:#fff;box-shadow:0 6px 12px rgba(0,0,0,.175)"></div></div>
<div class="ab" style="left:1186px;top:238px;width:158px;height:26px;background:#3b73af"></div>
<div class="ab" style="left:1195.2px;top:243px;color:#fff">Export Data</div>
<div class="ab" style="left:1195.2px;top:269px;color:#333">Export Matrix</div>
<div class="ab" style="left:1183px;top:200px;width:166px;height:90px;border:3px solid #ff0000"></div>
<div class="ab" style="left:0;top:754px;width:467px;height:28px;background:#f2f2f2;border:1px solid #cfcfcf;border-left:none;border-bottom:none;border-radius:0 4px 0 0"></div>
<div class="ab" style="left:4px;top:759px;font-size:14.7px;line-height:18px;color:#666;letter-spacing:0">localhost:8848/projects/FRS?projectKey=FRS&amp;selectedItem=com.g...</div>
<div class="ab" style="left:0;top:41px;width:1px;height:714px;background:#1e9bf0"></div>
<div class="ab" style="left:0;top:0;width:1px;height:41px;background:#1e9bf0"></div>
<div class="ab" style="left:0;top:782px;width:1392px;height:1px;background:#1e9bf0"></div>

</body></html>
